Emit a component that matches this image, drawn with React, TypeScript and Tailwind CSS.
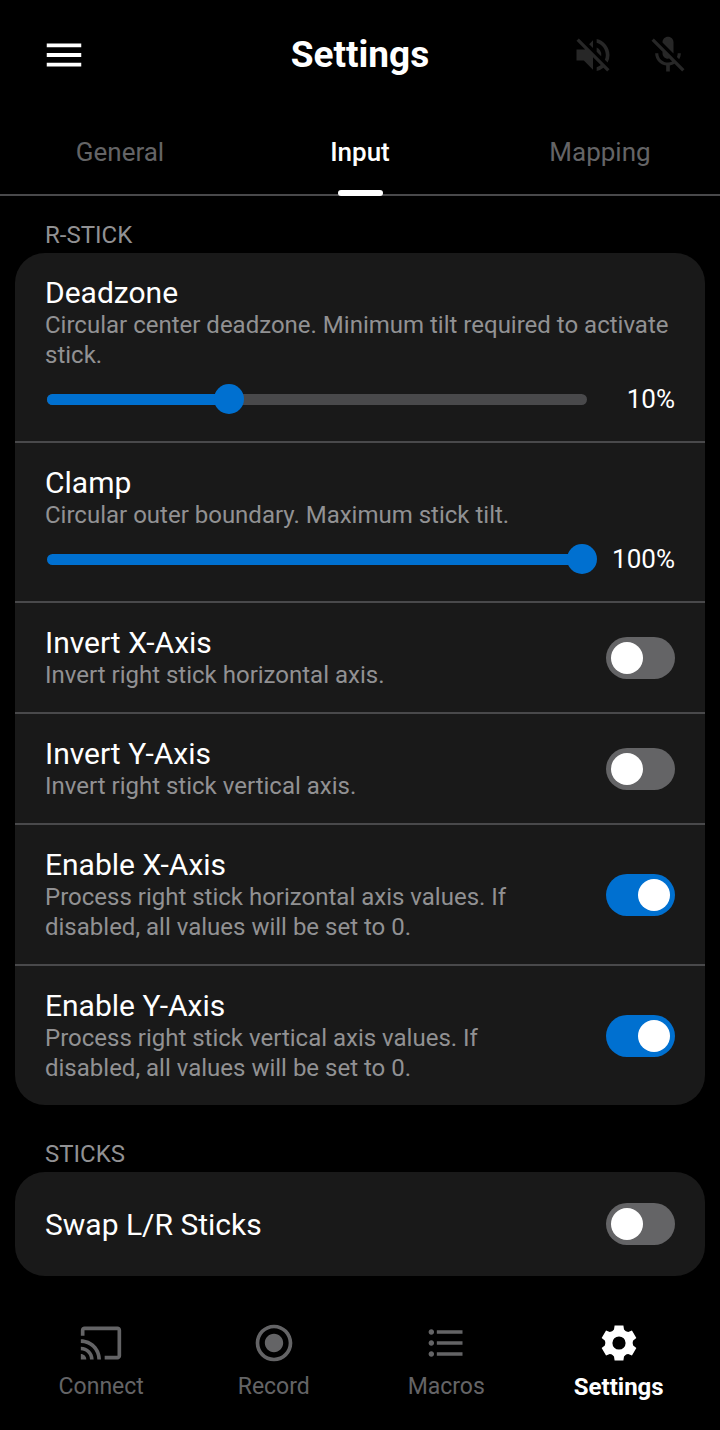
import React from "react";
import clsx from "clsx";
import {
  MdMenu,
  MdCast,
  MdRadioButtonChecked,
  MdFormatListBulleted,
  MdVolumeOff,
  MdMicOff,
} from "react-icons/md";

const tabs = ["General", "Input", "Mapping"];

type SliderRowProps = {
  id: string;
  title: string;
  description: string;
  value: number;
  max: number;
};

function SliderRow({ id, title, description, value, max }: SliderRowProps) {
  const [current, setCurrent] = React.useState(value);

  return (
    <div className="px-[30px] pt-[22px] pb-[27px]">
      <label htmlFor={id} className="block text-[30px] leading-[35px] text-white">
        {title}
      </label>
      <p className="text-[24px] leading-[30px] text-[#919193]">{description}</p>
      <div className="mt-[14px] flex items-center">
        <div className="-ml-2 grid h-[30px] flex-1 items-center">
          <div className="col-start-1 row-start-1 mx-[10px] h-[11px] overflow-hidden rounded-full bg-[#49494b]">
            <div className="h-full bg-[#0070d0]" style={{ width: `${(current / max) * 100}%` }} />
          </div>
          <input
            id={id}
            type="range"
            min={0}
            max={max}
            value={current}
            onChange={(e) => setCurrent(Number(e.target.value))}
            className="col-start-1 row-start-1 h-[30px] w-full cursor-pointer appearance-none bg-transparent [&::-webkit-slider-thumb]:size-[30px] [&::-webkit-slider-thumb]:appearance-none [&::-webkit-slider-thumb]:rounded-full [&::-webkit-slider-thumb]:bg-[#0070d0]"
          />
        </div>
        <output htmlFor={id} className="w-[78px] text-right text-[26px] leading-[30px] text-white">
          {current}%
        </output>
      </div>
    </div>
  );
}

type ToggleRowProps = {
  id: string;
  title: string;
  description?: string;
  on?: boolean;
};

function ToggleRow({ id, title, description, on = false }: ToggleRowProps) {
  return (
    <div className="flex min-h-[104px] items-center justify-between gap-[60px] px-[30px] py-[22px]">
      <div>
        <label htmlFor={id} className="block text-[30px] leading-[35px] text-white">
          {title}
        </label>
        {description && <p className="text-[24px] leading-[30px] text-[#919193]">{description}</p>}
      </div>
      <input
        id={id}
        type="checkbox"
        defaultChecked={on}
        className="flex h-[42px] w-[69px] shrink-0 cursor-pointer appearance-none items-center rounded-full bg-[#646466] px-[5px] before:size-8 before:rounded-full before:bg-white checked:justify-end checked:bg-[#0070d0]"
      />
    </div>
  );
}

function Section({ title, children }: { title: string; children: React.ReactNode }) {
  return (
    <section>
      <h2 className="px-[30px] pb-[3px] text-[24px] leading-[30px] text-[#919193] uppercase">{title}</h2>
      <div className="divide-y-2 divide-[#49494b] overflow-hidden rounded-[30px] bg-[#191919]">{children}</div>
    </section>
  );
}

// six-toothed gear: a ring plus one tooth repeated every 60 degrees
function GearIcon() {
  return (
    <svg viewBox="-18 -18 36 36" className="size-9" fill="currentColor">
      <circle r="9.9" fill="none" stroke="currentColor" strokeWidth="6.6" />
      {[0, 60, 120, 180, 240, 300].map((angle) => (
        <path key={angle} d="M-4.400 -17.500H4.400L5 -13.500Q6 -12.500 7 -11.500L5 -9H-5L-7 -11.500Q-6 -12.500 -5 -13.500Z" transform={`rotate(${angle})`} />
      ))}
    </svg>
  );
}

const navItems = [
  { label: "Connect", icon: <MdCast className="size-11" /> },
  { label: "Record", icon: <MdRadioButtonChecked className="size-11" /> },
  { label: "Macros", icon: <MdFormatListBulleted className="size-11" /> },
  { label: "Settings", icon: <GearIcon />, active: true },
];

export default function App() {
  return (
    <div className="flex min-h-screen flex-col bg-black font-['Roboto',sans-serif]">
      <header className="grid h-[109px] grid-cols-3 items-center px-[30px]">
        <button aria-label="Menu" className="justify-self-start p-[11px] text-white">
          <MdMenu className="size-[46px]" />
        </button>
        <h1 className="text-center text-[37px] leading-[44px] font-bold text-white">Settings</h1>
        <div className="flex gap-[31px] justify-self-end text-[#272727]">
          <button aria-label="Sound off">
            <MdVolumeOff className="size-11" />
          </button>
          <button aria-label="Microphone off">
            <MdMicOff className="size-11" />
          </button>
        </div>
      </header>

      <nav className="grid h-[87px] grid-cols-3 border-b-2 border-[#49494b]">
        {tabs.map((tab) => (
          <a
            key={tab}
            href="#"
            className={clsx(
              "relative flex items-center justify-center text-[26px] leading-8",
              tab === "Input" ? "font-medium text-white" : "text-[#646466]"
            )}
          >
            {tab}
            {tab === "Input" && <span className="absolute -bottom-[2px] h-[6px] w-[45px] rounded-full bg-white" />}
          </a>
        ))}
      </nav>

      <main className="flex flex-1 flex-col gap-[34px] px-[15px] pt-6">
        <Section title="R-Stick">
          <SliderRow
            id="deadzone"
            title="Deadzone"
            description="Circular center deadzone. Minimum tilt required to activate stick."
            value={10}
            max={30}
          />
          <SliderRow
            id="clamp"
            title="Clamp"
            description="Circular outer boundary. Maximum stick tilt."
            value={100}
            max={100}
          />
          <ToggleRow id="invert-x" title="Invert X-Axis" description="Invert right stick horizontal axis." />
          <ToggleRow id="invert-y" title="Invert Y-Axis" description="Invert right stick vertical axis." />
          <ToggleRow
            id="enable-x"
            title="Enable X-Axis"
            description="Process right stick horizontal axis values. If disabled, all values will be set to 0."
            on
          />
          <ToggleRow
            id="enable-y"
            title="Enable Y-Axis"
            description="Process right stick vertical axis values. If disabled, all values will be set to 0."
            on
          />
        </Section>
        <Section title="Sticks">
          <ToggleRow id="swap" title="Swap L/R Sticks" />
        </Section>
      </main>

      <nav className="grid grid-cols-4 px-[15px] pt-8 pb-[29px]">
        {navItems.map((item) => (
          <a
            key={item.label}
            href="#"
            className={clsx(
              "flex flex-col items-center gap-[6px] leading-7",
              item.active ? "text-[24px] font-bold text-white" : "text-[23px] text-[#646466]"
            )}
          >
            <span className="flex h-12 items-center">{item.icon}</span>
            {item.label}
          </a>
        ))}
      </nav>
    </div>
  );
}
